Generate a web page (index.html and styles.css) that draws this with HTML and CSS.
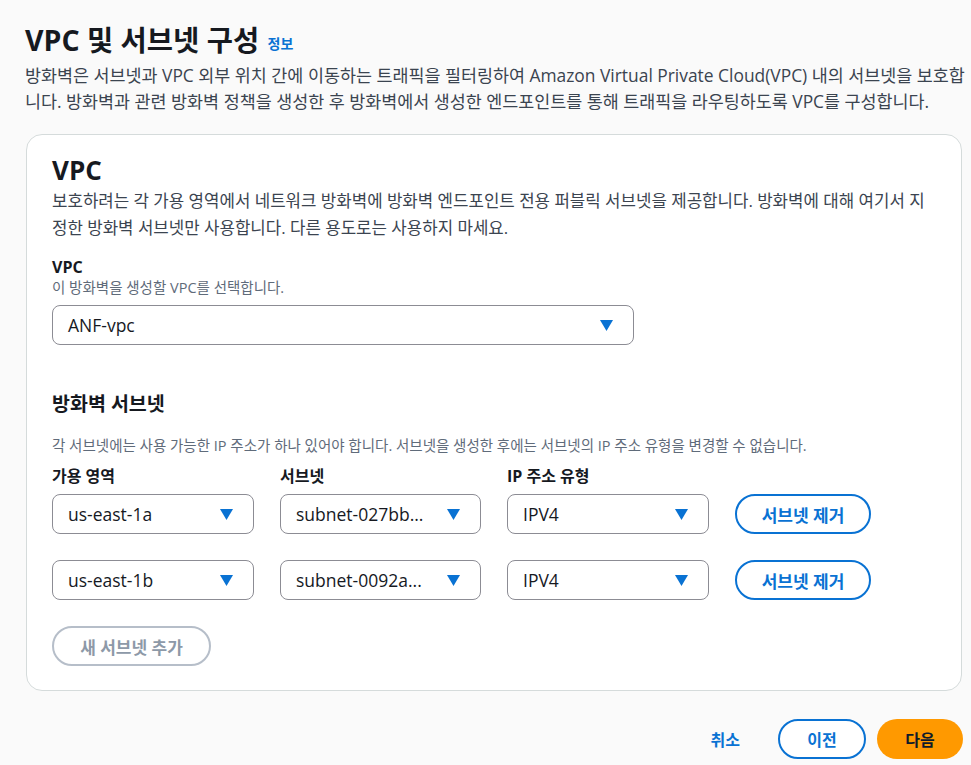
FILE: index.html
```html
<!DOCTYPE html>
<html lang="ko">
<head>
<meta charset="utf-8">
<link rel="stylesheet" href="styles.css">
</head>
<body>
<div class="page">
  <div class="header">
    <h1 class="title">VPC 및 서브넷 구성 <a class="info">정보</a></h1>
    <p class="desc">방화벽은 서브넷과 VPC 외부 위치 간에 이동하는 트래픽을 필터링하여 Amazon Virtual Private Cloud(VPC) 내의 서브넷을 보호합니다. 방화벽과 관련 방화벽 정책을 생성한 후 방화벽에서 생성한 엔드포인트를 통해 트래픽을 라우팅하도록 VPC를 구성합니다.</p>
  </div>
  <div class="card">
    <h2 class="card-title">VPC</h2>
    <p class="card-desc">보호하려는 각 가용 영역에서 네트워크 방화벽에 방화벽 엔드포인트 전용 퍼블릭 서브넷을 제공합니다. 방화벽에 대해 여기서 지정한 방화벽 서브넷만 사용합니다. 다른 용도로는 사용하지 마세요.</p>

    <div class="field">
      <div class="label">VPC</div>
      <div class="hint">이 방화벽을 생성할 VPC를 선택합니다.</div>
      <div class="select select-wide"><span>ANF-vpc</span><svg class="caret" viewBox="0 0 12 10"><path d="M0 0h12L6 10z"/></svg></div>
    </div>

    <h3 class="sub-title">방화벽 서브넷</h3>
    <div class="sub-hint">각 서브넷에는 사용 가능한 IP 주소가 하나 있어야 합니다. 서브넷을 생성한 후에는 서브넷의 IP 주소 유형을 변경할 수 없습니다.</div>

    <div class="grid">
      <div class="label">가용 영역</div>
      <div class="label">서브넷</div>
      <div class="label">IP 주소 유형</div>
      <div></div>

      <div class="select"><span>us-east-1a</span><svg class="caret" viewBox="0 0 12 10"><path d="M0 0h12L6 10z"/></svg></div>
      <div class="select"><span>subnet-027bb...</span><svg class="caret" viewBox="0 0 12 10"><path d="M0 0h12L6 10z"/></svg></div>
      <div class="select"><span>IPV4</span><svg class="caret" viewBox="0 0 12 10"><path d="M0 0h12L6 10z"/></svg></div>
      <div class="btn btn-outline">서브넷 제거</div>

      <div class="select row2"><span>us-east-1b</span><svg class="caret" viewBox="0 0 12 10"><path d="M0 0h12L6 10z"/></svg></div>
      <div class="select row2"><span>subnet-0092a...</span><svg class="caret" viewBox="0 0 12 10"><path d="M0 0h12L6 10z"/></svg></div>
      <div class="select row2"><span>IPV4</span><svg class="caret" viewBox="0 0 12 10"><path d="M0 0h12L6 10z"/></svg></div>
      <div class="btn btn-outline row2">서브넷 제거</div>
    </div>

    <div class="btn btn-disabled">새 서브넷 추가</div>
  </div>

  <div class="footer">
    <a class="link-btn">취소</a>
    <div class="btn btn-outline btn-prev">이전</div>
    <div class="btn btn-primary">다음</div>
  </div>
</div>
</body>
</html>
```

FILE: styles.css
```css
* { box-sizing: border-box; }
html, body { margin: 0; padding: 0; }
body {
  background: #fafafa;
  font-family: "Open Sans", "Noto Sans CJK KR", sans-serif;
  color: #16191f;
}
.page {
  padding: 22px 4px 0 25px;
}
.title {
  margin: 0;
  font-size: 28.5px;
  line-height: 36px;
  font-weight: 700;
  color: #16191f;
}
.info {
  font-size: 14px;
  font-weight: 700;
  color: #0972d3;
  margin-left: 1px;
  vertical-align: 2px;
}
.desc {
  margin: 0;
  font-size: 17.4px;
  line-height: 26px;
  color: #3b4450;
}
.card {
  margin: 20px 5px 0 1px;
  background: #fff;
  border: 1px solid #d5dbdb;
  border-radius: 16px;
  padding: 18px 26px 24px 25px;
}
.card-title {
  margin: 0;
  font-size: 26px;
  line-height: 34px;
  font-weight: 700;
}
.card-desc {
  margin: 0;
  font-size: 16.8px;
  line-height: 27px;
  color: #3b4450;
}
.field { margin-top: 15px; }
.label {
  font-size: 16px;
  font-weight: 700;
  line-height: 22px;
  color: #16191f;
}
.hint {
  font-size: 14.5px;
  line-height: 20px;
  color: #5f6b7a;
  margin-bottom: 7px;
}
.select {
  display: flex;
  align-items: center;
  justify-content: space-between;
  height: 40px;
  border: 1px solid #8c8c94;
  border-radius: 8px;
  background: #fff;
  padding: 0 20px 0 15px;
  font-size: 17.5px;
  color: #16191f;
}
.select-wide { width: 582px; }
.caret { width: 13px; height: 11px; fill: #0972d3; }
.sub-title {
  margin: 45px 0 0;
  font-size: 19.5px;
  line-height: 28px;
  font-weight: 700;
}
.sub-hint {
  margin-top: 18px;
  font-size: 14.5px;
  line-height: 20px;
  color: #5f6b7a;
}
.grid {
  display: grid;
  grid-template-columns: 202px 201px 202px 136px;
  column-gap: 26px;
  align-items: center;
  margin-top: 9px;
}
.grid .label { margin-bottom: 7px; }
.row2 { margin-top: 26px; }
.btn {
  display: flex;
  align-items: center;
  justify-content: center;
  height: 40px;
  border-radius: 20px;
  font-size: 17px;
  font-weight: 700;
}
.btn-outline {
  border: 2px solid #0972d3;
  color: #0972d3;
  background: #fff;
}
.btn-disabled {
  margin-top: 26px;
  width: 159px;
  border: 2px solid #b6bec9;
  color: #8d99a8;
  background: #fff;
}
.footer {
  display: flex;
  justify-content: flex-end;
  align-items: center;
  gap: 11px;
  margin: 28px 4px 0 0;
}
.link-btn {
  font-size: 16px;
  font-weight: 700;
  color: #0972d3;
  margin-right: 27px;
}
.btn-prev { width: 88px; font-size: 16px; }
.btn-primary {
  width: 86px;
  font-size: 16px;
  background: #ff9900;
  color: #0f1b2a;
}
```
